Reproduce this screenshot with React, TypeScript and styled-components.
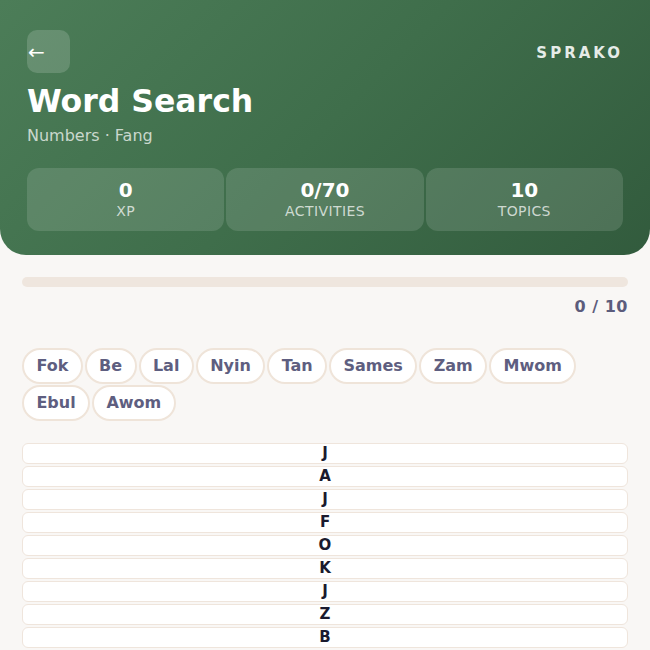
import React from "react";
import styled, { createGlobalStyle } from "styled-components";

const Global = createGlobalStyle`
  html, body { margin: 0; padding: 0; background: #f9f7f5; }
  body { font-family: "DejaVu Sans", "Liberation Sans", sans-serif; }
  * { box-sizing: border-box; }
`;

const Page = styled.div`
  min-height: 650px;
  background: #f9f7f5;
`;

const Header = styled.header`
  background: linear-gradient(135deg, #4c7d58 0%, #3f6e4b 50%, #325b3d 100%);
  border-radius: 0 0 26px 26px;
  padding: 30px 27px 24px 27px;
  color: #fff;
`;

const TopRow = styled.div`
  display: flex;
  align-items: center;
  justify-content: space-between;
`;

const BackButton = styled.button`
  width: 43px;
  height: 43px;
  border: none;
  border-radius: 10px;
  background: rgba(255, 255, 255, 0.16);
  color: #fff;
  font-family: "DejaVu Sans", sans-serif;
  font-size: 20px;
  display: flex;
  align-items: center;
  justify-content: flex-start;
  padding: 0 0 0 1px;
  cursor: pointer;
`;

const Brand = styled.div`
  font-size: 15px;
  font-weight: 700;
  letter-spacing: 3px;
  color: rgba(255, 255, 255, 0.88);
  margin-top: 2px;
`;

const Title = styled.h1`
  margin: 9px 0 0 0;
  font-size: 31.5px;
  line-height: 38px;
  font-weight: 700;
`;

const Subtitle = styled.div`
  margin-top: 4px;
  font-size: 16px;
  line-height: 1.5;
  color: rgba(255, 255, 255, 0.72);
`;

const Stats = styled.div`
  margin-top: 20px;
  display: grid;
  grid-template-columns: repeat(3, 1fr);
  gap: 2px;
`;

const StatBox = styled.div`
  background: rgba(255, 255, 255, 0.13);
  border-radius: 12px;
  padding: 10px 0 11px;
  display: flex;
  flex-direction: column;
  align-items: center;
  gap: 1px;
`;

const StatValue = styled.div`
  font-size: 20px;
  line-height: 1.2;
  font-weight: 700;
`;

const StatLabel = styled.div`
  font-size: 14px;
  line-height: 1.2;
  letter-spacing: 0.4px;
  color: rgba(255, 255, 255, 0.72);
`;

const Main = styled.main`
  padding: 22px 22px 0;
`;

const Bar = styled.div`
  height: 10px;
  border-radius: 5px;
  background: #efe6de;
  overflow: hidden;
`;

const BarFill = styled.div`
  height: 100%;
  background: #4c7d58;
`;

const Count = styled.div`
  margin-top: 8px;
  text-align: right;
  font-size: 16px;
  line-height: 1.5;
  font-weight: 700;
  color: #5c5c7c;
  letter-spacing: 0.5px;
`;

const Chips = styled.div`
  margin-top: 29px;
  display: flex;
  flex-wrap: wrap;
  column-gap: 2px;
  row-gap: 1px;
`;

const Chip = styled.div`
  height: 36px;
  padding: 0 12.4px;
  border: 2px solid #efe4d9;
  border-radius: 18px;
  background: #fff;
  display: flex;
  align-items: center;
  font-size: 16px;
  font-weight: 700;
  color: #5e5e80;
`;

const Grid = styled.div`
  margin-top: 22px;
  display: grid;
  grid-template-columns: 1fr;
  gap: 2px;
`;

const Cell = styled.div`
  height: 21px;
  border: 1.5px solid #efe5dc;
  border-radius: 6px;
  background: #fff;
  display: flex;
  align-items: center;
  justify-content: center;
  font-size: 15px;
  font-weight: 700;
  color: #1a1a2e;
`;

const words = ["Fok", "Be", "Lal", "Nyin", "Tan", "Sames", "Zam", "Mwom", "Ebul", "Awom"];
const letters = ["J", "A", "J", "F", "O", "K", "J", "Z", "B", "E", "M", "T"];

export default function App() {
  const found = 0;
  return (
    <Page>
      <Global />
      <Header>
        <TopRow>
          <BackButton aria-label="Back">←</BackButton>
          <Brand>SPRAKO</Brand>
        </TopRow>
        <Title>Word Search</Title>
        <Subtitle>Numbers · Fang</Subtitle>
        <Stats>
          <StatBox>
            <StatValue>0</StatValue>
            <StatLabel>XP</StatLabel>
          </StatBox>
          <StatBox>
            <StatValue>0/70</StatValue>
            <StatLabel>ACTIVITIES</StatLabel>
          </StatBox>
          <StatBox>
            <StatValue>10</StatValue>
            <StatLabel>TOPICS</StatLabel>
          </StatBox>
        </Stats>
      </Header>
      <Main>
        <Bar>
          <BarFill style={{ width: `${(found / words.length) * 100}%` }} />
        </Bar>
        <Count>
          {found} / {words.length}
        </Count>
        <Chips>
          {words.map((w) => (
            <Chip key={w}>{w}</Chip>
          ))}
        </Chips>
        <Grid>
          {letters.map((l, i) => (
            <Cell key={i}>{l}</Cell>
          ))}
        </Grid>
      </Main>
    </Page>
  );
}
